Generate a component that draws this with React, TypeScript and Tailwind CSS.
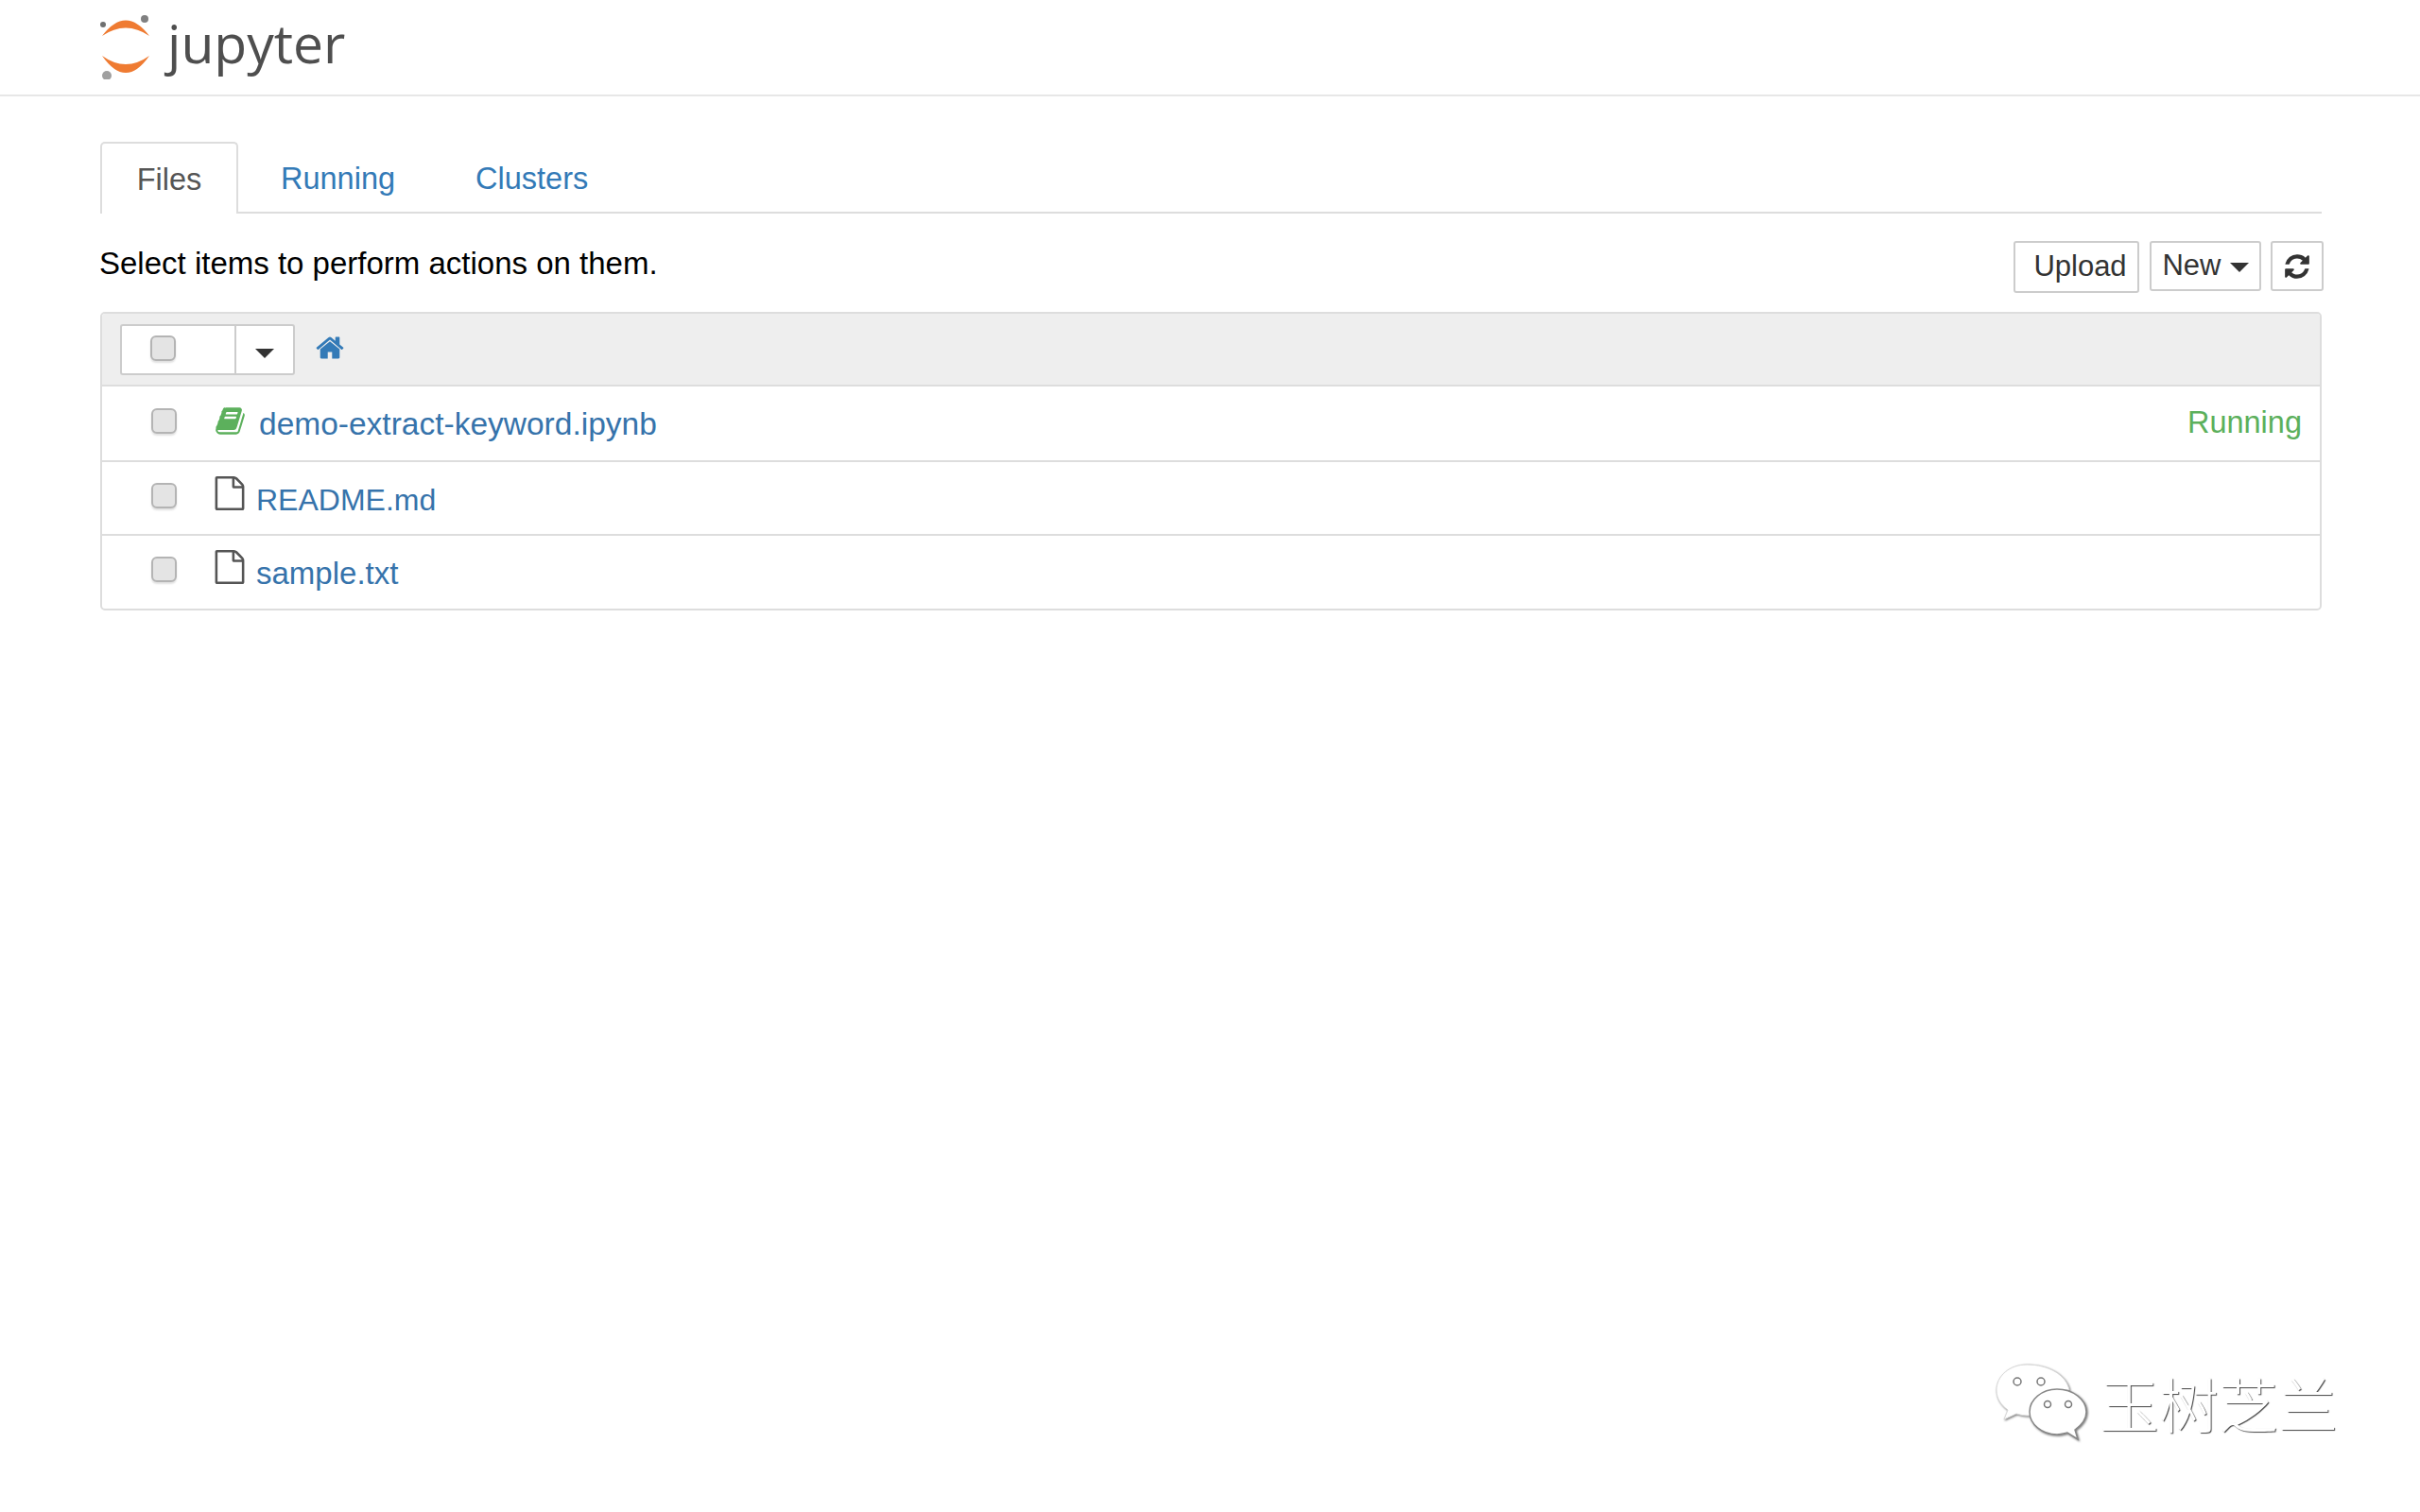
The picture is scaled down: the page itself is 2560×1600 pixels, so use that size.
const filePath =
  "M1596 380q28 28 48 76t20 88v1152q0 40-28 68t-68 28h-1344q-40 0-68-28t-28-68v-1600q0-40 28-68t68-28h896q40 0 88 20t76 48zm-444-244v376h376q-10-29-22-41l-313-313q-12-12-41-22zm384 1528v-1024h-416q-40 0-68-28t-28-68v-416h-768v1536h1280z";
const bookPath =
  "M1703 478q40 57 18 129l-275 906q-19 64-76.500 107.500t-122.500 43.500h-923q-77 0-148.500-53.500t-99.500-131.500q-24-67-2-127 0-4 3-27t4-37q1-8-3-21.500t-3-19.500q2-11 8-21t16.500-23.500 16.500-23.500q23-38 45-91.500t30-91.500q3-10 .5-30t-.5-28q3-11 17-28t17-23q21-36 42-92t25-90q1-9-2.500-32t.5-28q4-13 22-30.500t22-22.500q19-26 42.500-84.500t27.500-96.500q1-8-3-25.500t-2-26.500q2-8 9-18t18-23 17-21q8-12 16.500-30.500t15-35 16-36 19.500-32 26.500-23.500 36-11.500 47.500 5.500l-1 3q38-9 51-9h761q74 0 114 56t18 130l-274 906q-36 119-71.500 153.500t-128.500 34.500h-869q-27 0-38 15-11 16-1 43 24 70 144 70h923q29 0 56-15.500t35-41.500l300-987q7-22 5-57 38 15 59 43zm-1064 2q-4 13 2 22.500t20 9.500h608q13 0 25.500-9.500t16.500-22.500l21-64q4-13-2-22.500t-20-9.500h-608q-13 0-25.500 9.500t-16.500 22.500zm-83 256q-4 13 2 22.500t20 9.500h608q13 0 25.500-9.500t16.500-22.500l21-64q4-13-2-22.500t-20-9.500h-608q-13 0-25.500 9.500t-16.500 22.500z";
const homePath =
  "M1472 992v480q0 26-19 45t-45 19h-384v-384h-256v384h-384q-26 0-45-19t-19-45v-480q0-1 .5-3t.5-3l575-474 575 474q1 2 1 6zm223-69l-62 74q-8 9-21 11h-3q-13 0-21-7l-692-577-692 577q-12 8-24 7-13-2-21-11l-62-74q-8-10-7-23.500t11-20.500l719-599q32-26 76-26t76 26l244 204v-195q0-14 9-23t23-9h192q14 0 23 9t9 23v408l219 182q10 8 11 21.500t-7 23.500z";
const refreshPath =
  "M1639 1056q0 5-1 7-64 268-268 434.500t-478 166.500q-146 0-282.500-55t-243.500-157l-129 129q-19 19-45 19t-45-19-19-45v-448q0-26 19-45t45-19h448q26 0 45 19t19 45-19 45l-137 137q71 66 161 102t187 36q134 0 250-65t186-179q11-17 53-117 8-23 30-23h192q13 0 22.500 9.500t9.500 22.500zm25-800v448q0 26-19 45t-45 19h-448q-26 0-45-19t-19-45 19-45l138-138q-148-137-349-137-134 0-250 65t-186 179q-11 17-53 117-8 23-30 23h-199q-13 0-22.500-9.500t-9.500-22.500v-7q65-268 270-434.500t480-166.500q146 0 284 55.500t245 156.500l130-129q19-19 45-19t45 19 19 45z";

const Fa = ({ d, className }: { d: string; className: string }) => (
  <svg viewBox="0 0 1792 1792" className={className} fill="currentColor">
    <path d={d} />
  </svg>
);

const Checkbox = () => (
  <div className="w-[27px] h-[27px] shrink-0 rounded-[6px] border-2 border-[#b4b4b4] bg-[#e4e4e4] shadow-[0_2px_2px_rgba(0,0,0,0.12)]" />
);

const Caret = ({ className }: { className: string }) => (
  <span
    className={`inline-block w-0 h-0 border-x-[10px] border-x-transparent border-t-[10px] border-t-[#333] ${className}`}
  />
);

const JupyterLogo = () => (
  <svg viewBox="0 0 60 72" className="w-[60px] h-[72px] shrink-0">
    <path d="M4 26 Q29 -7 54 26 Q29 9 4 26Z" fill="#ef7b32" />
    <path d="M4 47 Q29 83 54 47 Q29 65 4 47Z" fill="#ef7b32" />
    <circle cx="49" cy="8" r="4" fill="#808081" />
    <circle cx="5" cy="14" r="3" fill="#6f7070" />
    <circle cx="9" cy="68" r="5" fill="#a0a0a0" />
  </svg>
);

const Row = ({
  name,
  size,
  notebook,
  running,
  last,
}: {
  name: string;
  size: string;
  notebook?: boolean;
  running?: boolean;
  last?: boolean;
}) => (
  <div
    className={`flex items-start pl-[52px] pr-[19px] ${
      notebook ? "h-[80px]" : last ? "h-[77px]" : "h-[78px]"
    } ${last ? "" : "border-b-2 border-[#ddd]"}`}
  >
    <div className={notebook ? "mt-[23px]" : "mt-[22px]"}>
      <Checkbox />
    </div>
    {notebook ? (
      <Fa d={bookPath} className="w-[33px] h-[33px] ml-[40px] mt-[20px] text-[#5cb05c]" />
    ) : (
      <Fa d={filePath} className="w-[36px] h-[36px] ml-[38px] mt-[15px] text-[#555]" />
    )}
    <a className={`${notebook ? "ml-[14px]" : "ml-[10px]"} ${size} mt-[18px] leading-[44px] text-[#3673ab]`}>
      {name}
    </a>
    {running && <span className="ml-auto mt-[16px] text-[32.5px] leading-[44px] text-[#5cb05c]">Running</span>}
  </div>
);

const btn =
  "flex items-center justify-center rounded-[3px] border-2 border-[#ccc] bg-white text-[#333]";

const App = () => {
  return (
    <div className="relative min-h-[1600px] bg-white text-[32px] text-black font-['Liberation_Sans',Arial,sans-serif]">
      {/* header */}
      <header className="flex h-[102px] items-start gap-[13px] border-b-2 border-[#e7e7e7] pl-[104px] pt-[12px]">
        <JupyterLogo />
        <span className="font-['Open_Sans',sans-serif] text-[57px] leading-[66px] text-[#4e4e4e]">
          jupyter
        </span>
      </header>

      <main className="pl-[106px] pr-[104px]">
        {/* tabs */}
        <nav className="mt-[48px] flex h-[76px] items-start border-b-2 border-[#ddd] text-[32.5px]">
          <div className="relative flex h-[76px] w-[146px] items-center justify-center rounded-t-[5px] border-2 border-b-0 border-[#ddd] bg-white pt-[2px] text-[#555]">
            Files
          </div>
          <a className="ml-[45px] flex h-[76px] items-center pt-[2px] text-[#337ab7]">Running</a>
          <a className="ml-[85px] flex h-[76px] items-center pt-[2px] text-[#337ab7]">Clusters</a>
        </nav>

        {/* toolbar */}
        <div className="mt-[29px] flex h-[54px] items-start justify-between">
          <p className="-ml-[1px] pt-[1px] text-[33px] leading-[46px]">Select items to perform actions on them.</p>
          <div className="-mr-[2px] flex items-start text-[31px]">
            <button className={`${btn} h-[55px] w-[133px] pl-[8px]`}>Upload</button>
            <button className={`${btn} ml-[11px] h-[53px] w-[118px] gap-[9px]`}>
              New
              <Caret className="mt-[3px]" />
            </button>
            <button className={`${btn} ml-[10px] h-[53px] w-[56px]`}>
              <Fa d={refreshPath} className="w-[30px] h-[30px]" />
            </button>
          </div>
        </div>

        {/* file list */}
        <section className="mt-[21px] overflow-hidden rounded-[5px] border-2 border-[#ddd]">
          <div className="flex h-[77px] items-start border-b-2 border-[#ddd] bg-[#eee] pl-[19px] pt-[11px]">
            <div className="flex h-[54px] w-[185px] rounded-[3px] border-2 border-[#ccc] bg-white">
              <div className="flex w-[121px] items-start border-r-2 border-[#ccc] pl-[30px] pt-[10px]">
                <Checkbox />
              </div>
              <div className="flex flex-1 items-center justify-center pt-[7px]">
                <Caret className="" />
              </div>
            </div>
            <Fa d={homePath} className="w-[32px] h-[32px] ml-[21px] mt-[9px] text-[#337ab7]" />
          </div>
          <Row name="demo-extract-keyword.ipynb" size="text-[33.5px]" notebook running />
          <Row name="README.md" size="text-[32px]" />
          <Row name="sample.txt" size="text-[33px]" last />
        </section>
      </main>

      {/* watermark */}
      <div className="absolute left-[2110px] top-[1442px] flex items-center">
        <svg viewBox="0 0 104 84" className="w-[104px] h-[84px] drop-shadow-[1px_1px_1px_rgba(0,0,0,0.55)]">
          <path
            d="M34 2C16 2 2 14 2 29c0 9 5 16 12 21l-4 10 13-6c4 1 7 2 11 2 3 0 5 0 7-1 6-22 20-28 38-26C76 13 57 2 34 2Z"
            fill="#fff"
            stroke="#d8d8d8"
            strokeWidth="1"
          />
          <circle cx="24" cy="20" r="4" fill="#fff" stroke="#777" strokeWidth="1.5" />
          <circle cx="49" cy="20" r="4" fill="#fff" stroke="#777" strokeWidth="1.5" />
          <path
            d="M66 28c-16 0-29 11-29 24s13 24 29 24c4 0 7-1 11-2l11 7-3-10c7-5 12-11 12-19 0-13-14-24-31-24Z"
            fill="#fff"
            stroke="#888"
            strokeWidth="1.5"
          />
          <circle cx="56" cy="44" r="3.5" fill="#fff" stroke="#777" strokeWidth="1.5" />
          <circle cx="78" cy="44" r="3.5" fill="#fff" stroke="#777" strokeWidth="1.5" />
        </svg>
        <span className="ml-[7px] font-['Noto_Sans_CJK_SC',sans-serif] text-[63px] leading-[70px] font-light text-white [text-shadow:1px_1px_1px_#444]">
          玉树芝兰
        </span>
      </div>
    </div>
  );
};

export default App;
